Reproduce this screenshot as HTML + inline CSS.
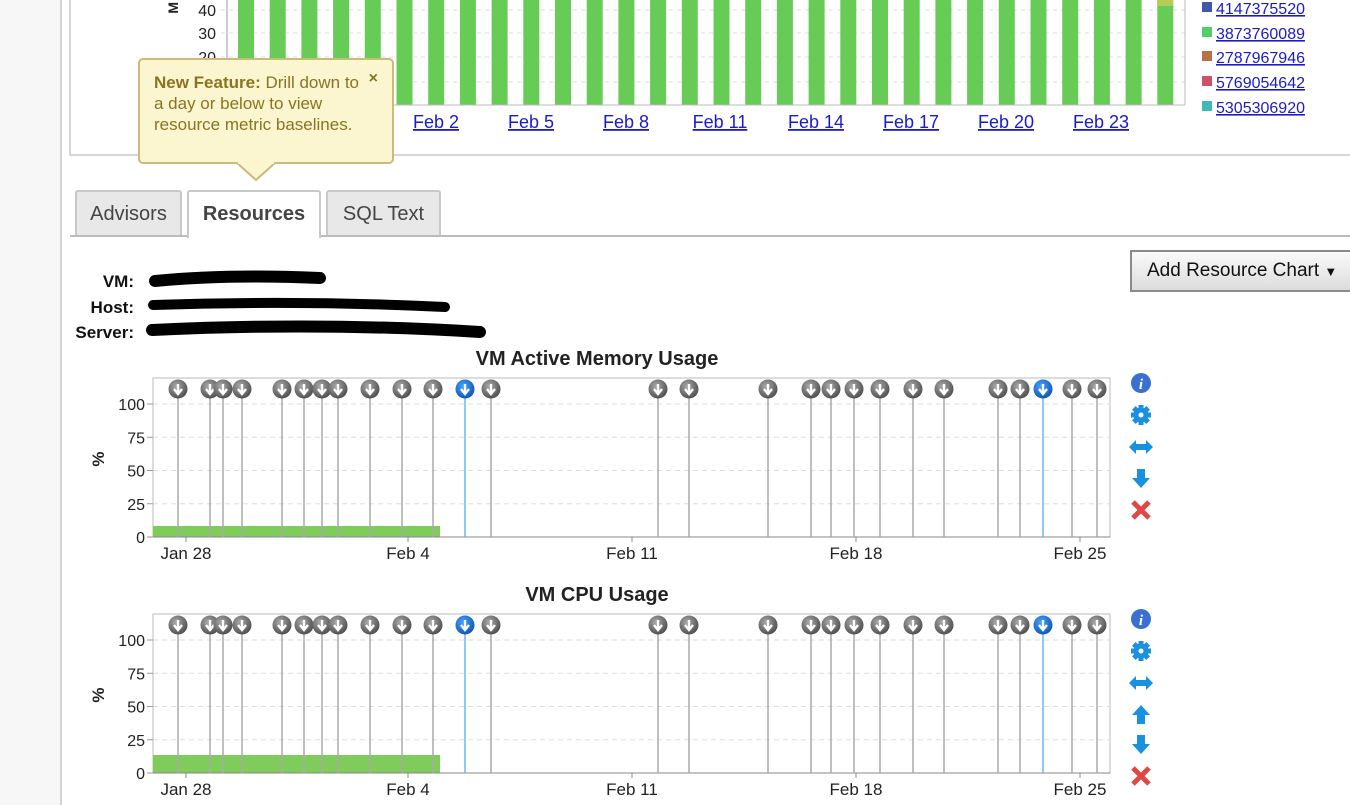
<!DOCTYPE html>
<html><head><meta charset="utf-8"><style>
body{margin:0;width:1350px;height:805px;overflow:hidden;background:#fff;font-family:"Liberation Sans",Arial,sans-serif;position:relative}
.abs{position:absolute}
.lm{left:0;top:0;width:60px;height:805px;background:#f7f7f7;border-right:2px solid #d4d4d4}
.tab{position:absolute;top:190px;height:45px;border:2px solid #c8c8c8;border-bottom:none;background:#e8e8e8;font-size:20px;color:#444;text-align:center;line-height:45px;box-sizing:border-box;border-radius:3px 3px 0 0}
.tip{left:138px;top:58px;width:256px;height:106px;background:#fbf5d0;border:2px solid #c9bb7a;border-radius:5px;box-sizing:border-box;color:#8a7420;font-size:17px;line-height:21px;padding:12px 30px 12px 14px}
.btn{left:1130px;top:250px;width:230px;height:42px;border:2px solid #8a8a8a;box-sizing:border-box;background:linear-gradient(#fafafa,#dcdcdc);font-size:19px;line-height:38px;padding-left:15px;color:#111}
</style></head><body>
<div class="abs lm"></div>
<svg class="abs" style="left:0;top:0" width="1350" height="805" id="sv" font-family="Liberation Sans, Arial, sans-serif">
<rect x="70" y="-2" width="1290" height="157" fill="none" stroke="#c8c8c8" stroke-width="1.5"/>
<g id="topbars"></g>
<line x1="227" y1="0" x2="227" y2="105" stroke="#999"/>
<line x1="227" y1="105" x2="1185" y2="105" stroke="#bbb"/>
<line x1="1185" y1="0" x2="1185" y2="105" stroke="#bbb"/>
<text x="216" y="16" font-size="16" text-anchor="end" fill="#222">40</text>
<text x="216" y="39" font-size="16" text-anchor="end" fill="#222">30</text>
<text x="216" y="63" font-size="16" text-anchor="end" fill="#222">20</text>
<text transform="translate(178,2) rotate(-90)" font-size="14" font-weight="bold" fill="#222" text-anchor="end">M</text>
<g font-size="18" fill="#1a1acc" text-decoration="underline" text-anchor="middle">
<text x="436" y="128">Feb 2</text><text x="531" y="128">Feb 5</text><text x="626" y="128">Feb 8</text><text x="720" y="128">Feb 11</text><text x="816" y="128">Feb 14</text><text x="911" y="128">Feb 17</text><text x="1006" y="128">Feb 20</text><text x="1101" y="128">Feb 23</text>
</g>
<g font-size="16" fill="#1a1acc" text-decoration="underline">
<rect x="1202" y="2" width="10" height="10" fill="#4058a8"/><text x="1216" y="14">4147375520</text>
<rect x="1202" y="27" width="10" height="10" fill="#4fcf6a"/><text x="1216" y="39">3873760089</text>
<rect x="1202" y="51" width="10" height="10" fill="#b87048"/><text x="1216" y="63">2787967946</text>
<rect x="1202" y="76" width="10" height="10" fill="#cf506a"/><text x="1216" y="88">5769054642</text>
<rect x="1202" y="101" width="10" height="10" fill="#40b8b8"/><text x="1216" y="113">5305306920</text>
</g>
<line x1="70" y1="236" x2="1350" y2="236" stroke="#bbb" stroke-width="2"/>
<g font-size="17" font-weight="bold" fill="#111" text-anchor="end">
<text x="134" y="287">VM:</text><text x="134" y="313">Host:</text><text x="134" y="338">Server:</text>
</g>
<path d="M155 281 Q230 274 320 278" stroke="#000" stroke-width="12" stroke-linecap="round" fill="none"/>
<path d="M153 305 Q300 300 445 307" stroke="#000" stroke-width="10" stroke-linecap="round" fill="none"/>
<path d="M152 330 Q320 322 480 332" stroke="#000" stroke-width="12" stroke-linecap="round" fill="none"/>
<text x="597" y="365" font-size="20" font-weight="bold" text-anchor="middle" fill="#222">VM Active Memory Usage</text>
<text x="597" y="601" font-size="20" font-weight="bold" text-anchor="middle" fill="#222">VM CPU Usage</text>
<g id="c1"></g><g id="c2"></g>
<defs>
<radialGradient id="gg" cx="0.4" cy="0.35" r="0.7"><stop offset="0" stop-color="#aaa"/><stop offset="1" stop-color="#4a4a4a"/></radialGradient>
<radialGradient id="bg" cx="0.4" cy="0.35" r="0.7"><stop offset="0" stop-color="#4aa0ff"/><stop offset="1" stop-color="#0a55b0"/></radialGradient>
</defs>
<g id="icons"></g>
</svg>
<div class="abs tip"><b>New Feature:</b> Drill down to a day or below to view resource metric baselines.<span style="position:absolute;right:14px;top:8px;font-weight:bold;font-size:16px">×</span></div>
<svg class="abs" style="left:236px;top:162px" width="40" height="20"><path d="M0 0 L20 18 L40 0" fill="#fbf5d0" stroke="#c9bb7a" stroke-width="2"/><rect x="2" y="0" width="36" height="2" fill="#fbf5d0"/></svg>
<div class="tab" style="left:75px;width:107px">Advisors</div>
<div class="tab" style="left:187px;width:134px;background:#fff;font-weight:bold;height:48px;color:#444">Resources</div>
<div class="tab" style="left:326px;width:115px">SQL Text</div>
<div class="abs btn">Add Resource Chart <span style="font-size:13px">▼</span></div>
<script>
var NS="http://www.w3.org/2000/svg";
function el(p,t,a,tx){var e=document.createElementNS(NS,t);for(var k in a)e.setAttribute(k,a[k]);if(tx)e.textContent=tx;p.appendChild(e);return e;}
var tb=document.getElementById('topbars');
[10,33,57,82].forEach(function(y){el(tb,'line',{x1:221,y1:y,x2:1185,y2:y,stroke:'#ddd','stroke-dasharray':'4 4'});});
for(var i=0;i<30;i++){var x=238+i*31.7;el(tb,'rect',{x:x,y:0,width:16,height:105,fill:'#66cc55'});}
el(tb,'rect',{x:1157,y:0,width:16,height:6,fill:'#b8cc55'});
var mk=[178,210,223,242,282,304,322,338,370,402,433,465,491,658,689,768,811,831,854,880,913,944,998,1020,1043,1072,1097];
function chart(g,top,bottom,barH){
 var G=document.getElementById(g);var L=153,R=1110,h=bottom-top;
 el(G,'rect',{x:L,y:top,width:R-L,height:h,fill:'#fff',stroke:'#bbb'});
 var lab=[100,75,50,25,0];
 var y100=top+26,step=(bottom-y100)/4;
 lab.forEach(function(v,i){var y=y100+i*step;if(v)el(G,'line',{x1:L,y1:y,x2:R,y2:y,stroke:'#ddd','stroke-dasharray':'5 4'});el(G,'line',{x1:L-6,y1:y,x2:L,y2:y,stroke:'#999'});el(G,'text',{x:L-8,y:y+6,'font-size':16,'text-anchor':'end',fill:'#222'},String(v));});
 el(G,'text',{transform:'translate(104,'+(top+81)+') rotate(-90)','font-size':17,'font-weight':'bold','text-anchor':'middle',fill:'#222'},'%');
 el(G,'rect',{x:L,y:bottom-barH,width:440-L,height:barH,fill:'#80cc5a'});
 el(G,'line',{x1:L,y1:bottom,x2:R,y2:bottom,stroke:'#888'});
 [[186,'Jan 28'],[408,'Feb 4'],[632,'Feb 11'],[856,'Feb 18'],[1080,'Feb 25']].forEach(function(a){el(G,'line',{x1:a[0],y1:bottom,x2:a[0],y2:bottom+5,stroke:'#888'});el(G,'text',{x:a[0],y:bottom+22,'font-size':17,'text-anchor':'middle',fill:'#222'},a[1]);});
 mk.forEach(function(x){var b=(x==465||x==1043);el(G,'line',{x1:x,y1:top+10,x2:x,y2:bottom,stroke:b?'#6ab8f0':'#aaa','stroke-width':1.5});});
 mk.forEach(function(x){var b=(x==465||x==1043);var cy=top+11;el(G,'circle',{cx:x,cy:cy,r:9.5,fill:b?'url(#bg)':'url(#gg)'});el(G,'path',{d:'M'+x+' '+(cy-5)+'V'+(cy+4)+'M'+(x-4)+' '+cy+'L'+x+' '+(cy+5)+'L'+(x+4)+' '+cy,stroke:'#fff','stroke-width':2.4,fill:'none'});});
}
chart('c1',378,537,11);chart('c2',614,773,18);
var I=document.getElementById('icons');
function info(y){el(I,'circle',{cx:1141,cy:y,r:10,fill:'#3a70d0'});el(I,'text',{x:1141,y:y+6,'font-size':15,'font-weight':'bold','font-style':'italic','font-family':'Liberation Serif, serif','text-anchor':'middle',fill:'#fff'},'i');}
function gear(y){var g=el(I,'g',{transform:'translate(1141,'+y+')'});for(var a=0;a<8;a++)el(g,'rect',{x:-2.5,y:-10,width:5,height:20,fill:'#1a90e0',transform:'rotate('+(a*45)+')'});el(g,'circle',{r:7.5,fill:'#1a90e0'});el(g,'circle',{r:2.5,fill:'#fff'});}
function harr(y){el(I,'path',{d:'M1129 '+y+'l7 -7v4h10v-4l7 7l-7 7v-4h-10v4z',fill:'#1a90e0'});}
function down(y){el(I,'path',{d:'M1137 '+(y-10)+'h8v9h5l-9 10l-9 -10h5z',fill:'#1a90e0'});}
function up(y){el(I,'path',{d:'M1137 '+(y+10)+'h8v-9h5l-9 -10l-9 10h5z',fill:'#1a90e0'});}
function xx(y){el(I,'path',{d:'M1133 '+(y-8)+'L1149 '+(y+8)+'M1149 '+(y-8)+'L1133 '+(y+8),stroke:'#e04848','stroke-width':5});}
info(383);gear(415);harr(447);down(479);xx(510);
info(619);gear(651);harr(683);up(714);down(745);xx(776);
</script>
</body></html>
